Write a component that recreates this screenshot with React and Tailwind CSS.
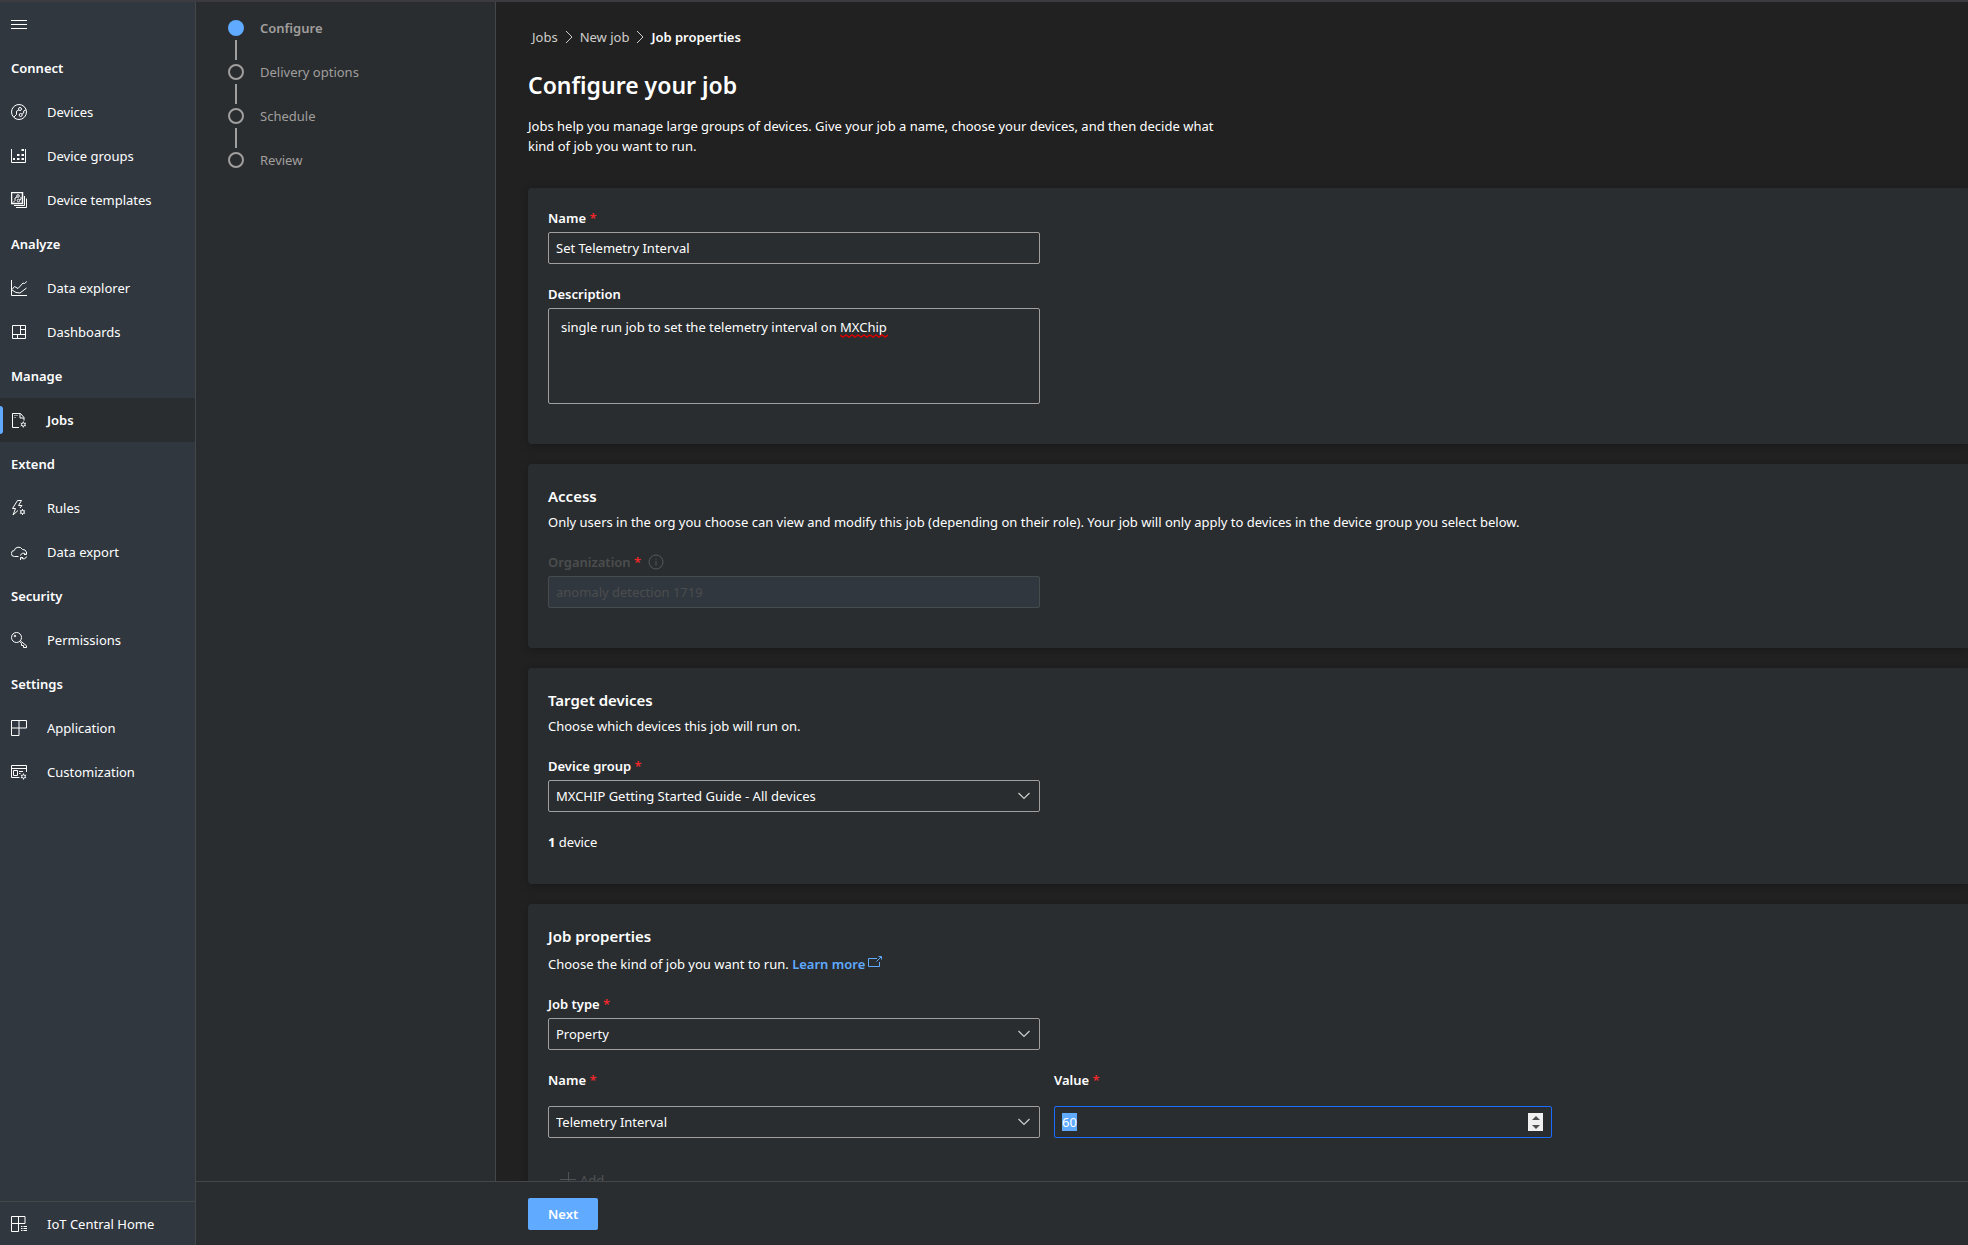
import { useEffect, useRef } from "react";

function Icon({ children, className = "" }) {
  return (
    <svg
      viewBox="0 0 16 16"
      fill="none"
      stroke="currentColor"
      strokeWidth="1"
      aria-hidden="true"
      className={`h-4 w-4 shrink-0 ${className}`}
    >
      {children}
    </svg>
  );
}

function Gear({ x, y }) {
  return (
    <g transform={`translate(${x} ${y})`}>
      <circle r="1.7" />
      <path d="M0-1.7V-3M0 1.7V3M-1.5-.8-2.6-1.5M1.5.8 2.6 1.5M-1.5.8-2.6 1.5M1.5-.8 2.6-1.5" />
    </g>
  );
}

const icons = {
  menu: (
    <Icon>
      <path d="M0 4.5h16M0 8.5h16M0 12.5h16" />
    </Icon>
  ),
  devices: (
    <Icon>
      <circle cx="8" cy="8" r="7.5" />
      <circle cx="9" cy="5" r="1.5" />
      <circle cx="9.7" cy="11" r="1.5" />
      <path d="M7.8 6 5.5 7.2v3.3L3 13M11 10.2l1.7-1.2V7l2.2-1.2" />
    </Icon>
  ),
  groups: (
    <Icon>
      <path d="M.5 1v13.5h14V1" />
      <path
        stroke="none"
        fill="currentColor"
        d="M2 10h2v2H2zM6 10h2.500v2H6zM10.500 10H13v2h-2.500zM6 6h2.500v2H6zM10.500 6H13v2h-2.500zM10.500 1H13v2h-2.500z"
      />
    </Icon>
  ),
  templates: (
    <Icon>
      <path d="M.5.5h11v11H.5z" strokeWidth="1.500" />
      <circle cx="7" cy="4" r="1.300" />
      <circle cx="7.500" cy="8.500" r="1.300" />
      <path d="M6 5 4 6v2.500L2 10.500M8.600 8l1.400-1V5" />
      <path d="M3 13.500h10.500V4M5 15.500h10.500V6.500" />
    </Icon>
  ),
  explorer: (
    <Icon>
      <path d="M.5 0v15.500H16" />
      <path d="m1 9.500 2.500-3 3.500 2 5-5.500 1.500.5L15.800 1.500M1 10l4 2.500 4 .5 6.500-5" />
    </Icon>
  ),
  dashboards: (
    <Icon>
      <path d="M1.500 1.500h13v13h-13zM9.500 1.500v8.500M1.500 10.500h13M9.500 5.500h5M6.500 10.500v4" />
    </Icon>
  ),
  jobs: (
    <Icon>
      <path d="M8 15.500H1.500V1.500h8l3.500 4v3M9 1.500v4.500h4" />
      <path d="M3.500 3.500h4M3.500 5.500h1.500" strokeDasharray="1 1" />
      <Gear x="12.300" y="12.500" />
    </Icon>
  ),
  rules: (
    <Icon>
      <path d="M6.500.5 1.500 8.500h3L2 15l5-4.500M6.500.5h4l-3 5H11L9 8" />
      <Gear x="11.500" y="12" />
    </Icon>
  ),
  export: (
    <Icon>
      <path d="M7.500 12.500H3.500a3 3 0 0 1-.3-6A4.500 4.500 0 0 1 11.500 5.500a3.500 3.500 0 0 1 3.800 2.500" />
      <path d="M9.500 11.500a3 3 0 0 1 5-1.500M15.500 8v2.500H13M15.500 12.500a3 3 0 0 1-5 1.500M9.500 16v-2.500H12" />
    </Icon>
  ),
  key: (
    <Icon>
      <circle cx="5.500" cy="5.500" r="5" />
      <circle cx="4" cy="4" r=".8" />
      <path d="m9.300 8.800 6.200 5v1.700h-3v-2h-2v-2L8.800 9.600" />
    </Icon>
  ),
  application: (
    <Icon>
      <path d="M.5.5h15v7.500H.5zM.5 8v7.500H8V.5" />
    </Icon>
  ),
  customization: (
    <Icon>
      <path d="M8.500 13.500H.5V1.500h15V8M.5 4.500h15M2.500 6.500h4v5h-4zM8 7.500h4M8 9.500h1.500" />
      <Gear x="12.500" y="12.500" />
    </Icon>
  ),
  home: (
    <Icon>
      <path d="M.5.500h13.500v7H.5zM7.500 15.500h-7v-8M7.500.5v15M10 10.500h1.500M12.500 10.500H16M10 12.500h1.500M12.500 12.500H16M10 14.500h1.500M12.500 14.500H16" />
    </Icon>
  ),
};

const sections = [
  { title: "Connect", items: [["Devices", "devices"], ["Device groups", "groups"], ["Device templates", "templates"]] },
  { title: "Analyze", items: [["Data explorer", "explorer"], ["Dashboards", "dashboards"]] },
  { title: "Manage", items: [["Jobs", "jobs"]] },
  { title: "Extend", items: [["Rules", "rules"], ["Data export", "export"]] },
  { title: "Security", items: [["Permissions", "key"]] },
  { title: "Settings", items: [["Application", "application"], ["Customization", "customization"]] },
];

const steps = ["Configure", "Delivery options", "Schedule", "Review"];

function NavItem({ label, icon, active }) {
  return (
    <a
      href="#"
      aria-current={active ? "page" : undefined}
      className={`relative flex h-11 items-center gap-5 pl-[11px] ${active ? "bg-[#292d30] font-semibold" : ""}`}
    >
      {active && <span className="absolute left-0 h-7 w-[3px] rounded-r-sm bg-[#60aaff]" />}
      {icons[icon]}
      {label}
    </a>
  );
}

function Sidebar() {
  return (
    <nav className="flex w-[196px] shrink-0 flex-col border-r border-[#43474a] bg-[#30373f]">
      <button type="button" aria-label="Toggle navigation" className="flex h-11 items-center pl-[11px]">
        {icons.menu}
      </button>
      {sections.map((s) => (
        <div key={s.title}>
          <h2 className="flex h-11 items-center pl-[11px] font-semibold">{s.title}</h2>
          {s.items.map(([label, icon]) => (
            <NavItem key={label} label={label} icon={icon} active={label === "Jobs"} />
          ))}
        </div>
      ))}
      <div className="mt-auto h-11 border-t border-[#43474a]">
        <NavItem label="IoT Central Home" icon="home" />
      </div>
    </nav>
  );
}

function Steps() {
  return (
    <ol className="w-[300px] shrink-0 border-r border-[#43474a] bg-[#292d30] pt-1 pl-8 text-[#a19f9d]">
      {steps.map((step, i) => (
        <li key={step} aria-current={i === 0 ? "step" : undefined} className="flex h-11 gap-4">
          <div className="flex w-4 flex-col items-center gap-1 pt-[14px]">
            <span
              className={`h-4 w-4 shrink-0 rounded-full ${i === 0 ? "bg-[#60aaff]" : "border-2 border-[#a19f9d]"}`}
            />
            {i < steps.length - 1 && <span className="h-5 w-[2px] shrink-0 bg-[#a19f9d]" />}
          </div>
          <span className={`pt-3 ${i === 0 ? "font-semibold" : ""}`}>{step}</span>
        </li>
      ))}
    </ol>
  );
}

function Label({ htmlFor, children, required, disabled }) {
  return (
    <label htmlFor={htmlFor} className={`block font-semibold ${disabled ? "text-[#4c4d4e]" : ""}`}>
      {children}
      {required && <span className="text-[#f1272a]"> *</span>}
    </label>
  );
}

function Chevron({ className }) {
  return (
    <svg viewBox="0 0 12 8" fill="none" stroke="currentColor" strokeWidth="1.2" aria-hidden="true" className={className}>
      <path d="m.5 1 5.500 5.500L11.500 1" />
    </svg>
  );
}

const box = "h-8 w-full rounded-xs border bg-transparent px-[7px] outline-none";

function Select({ id, value }) {
  return (
    <div className="relative">
      <select id={id} defaultValue={value} className={`${box} appearance-none border-[#a19f9d]`}>
        <option>{value}</option>
      </select>
      <Chevron className="pointer-events-none absolute top-3 right-[10px] h-2 w-3 text-[#d0cecc]" />
    </div>
  );
}

function Card({ title, children }) {
  return (
    <section className="rounded-l bg-[#292d30] p-5 shadow-[0_2px_8px_rgba(0,0,0,0.25)]">
      {title && <h2 className="text-[15px] leading-6 font-semibold">{title}</h2>}
      {children}
    </section>
  );
}

function Separator() {
  return (
    <svg viewBox="0 0 8 14" fill="none" stroke="currentColor" aria-hidden="true" className="h-[14px] w-2">
      <path d="m1 1 6 6-6 6" />
    </svg>
  );
}

function ValueInput() {
  const ref = useRef(null);
  useEffect(() => {
    ref.current.focus();
    ref.current.select();
  }, []);
  return (
    <div className="relative">
      <input
        ref={ref}
        id="prop-value"
        type="number"
        defaultValue="60"
        className={`${box} [appearance:textfield] border-[#1a6dff] selection:bg-[#60aaff] selection:text-white [&::-webkit-inner-spin-button]:appearance-none`}
      />
      <span className="absolute top-[7px] right-[9px] flex h-[18px] w-[15px] flex-col bg-[#f1f1f1] text-[#505050]">
        <button type="button" tabIndex={-1} aria-label="Increase" className="flex flex-1 items-center justify-center">
          <svg viewBox="0 0 8 4" className="h-1 w-2" fill="currentColor"><path d="M4 0 8 4H0z" /></svg>
        </button>
        <button type="button" tabIndex={-1} aria-label="Decrease" className="flex flex-1 items-center justify-center">
          <svg viewBox="0 0 8 4" className="h-1 w-2" fill="currentColor"><path d="M4 4 8 0H0z" /></svg>
        </button>
      </span>
    </div>
  );
}

function JobForm() {
  return (
    <main className="min-w-0 flex-1 overflow-hidden bg-[#212121] pt-[25px] pl-8">
      <nav aria-label="Breadcrumb" className="flex items-center gap-[7px] pl-1 text-[#d0cecc]">
        <a href="#">Jobs</a>
        <Separator />
        <a href="#">New job</a>
        <Separator />
        <span className="font-semibold text-white">Job properties</span>
      </nav>
      <h1 className="mt-[22px] text-[23px] leading-8 font-semibold">Configure your job</h1>
      <p className="mt-[15px] max-w-[712px]">
        Jobs help you manage large groups of devices. Give your job a name, choose your devices, and then decide what
        kind of job you want to run.
      </p>

      <form className="mt-8 flex flex-col gap-5">
        <Card>
          <div className="flex max-w-[492px] flex-col gap-1">
            <Label htmlFor="job-name" required>Name</Label>
            <input id="job-name" defaultValue="Set Telemetry Interval" className={`${box} border-[#a19f9d]`} />
          </div>
          <div className="mt-5 mb-5 flex max-w-[492px] flex-col gap-1">
            <Label htmlFor="job-description">Description</Label>
            <div className="relative">
              <textarea
                id="job-description"
                spellCheck={false}
                defaultValue="single run job to set the telemetry interval on MXChip"
                className="block h-24 w-full resize-none rounded-xs border border-[#a19f9d] bg-transparent px-3 py-2 outline-none"
              />
              <svg
                viewBox="0 0 48 4"
                fill="none"
                stroke="#d40000"
                strokeWidth="1.5"
                aria-hidden="true"
                className="pointer-events-none absolute top-[26px] left-[292px] h-1 w-12"
              >
                <path d="m0 1 3 2 3-2 3 2 3-2 3 2 3-2 3 2 3-2 3 2 3-2 3 2 3-2 3 2 3-2 3 2 3-2" />
              </svg>
            </div>
          </div>
        </Card>

        <Card title="Access">
          <p className="mt-1">
            Only users in the org you choose can view and modify this job (depending on their role). Your job will only
            apply to devices in the device group you select below.
          </p>
          <div className="mt-5 mb-5 flex max-w-[492px] flex-col gap-1">
            <div className="flex items-center gap-[7px]">
              <Label htmlFor="organization" required disabled>Organization</Label>
              <Icon className="text-[#56585a]">
                <circle cx="8" cy="8" r="7" />
                <path d="M8 7v4.500M8 4.500v1" />
              </Icon>
            </div>
            <input
              id="organization"
              disabled
              defaultValue="anomaly detection 1719"
              className="h-8 w-full rounded-xs border border-[#484b4d] bg-[#30373f] px-[7px] text-[#4c4d4e]"
            />
          </div>
        </Card>

        <Card title="Target devices">
          <p className="mt-1">Choose which devices this job will run on.</p>
          <div className="mt-5 flex max-w-[492px] flex-col gap-1">
            <Label htmlFor="device-group" required>Device group</Label>
            <Select id="device-group" value="MXCHIP Getting Started Guide - All devices" />
          </div>
          <p className="mt-5 mb-3"><b>1</b> device</p>
        </Card>

        <Card title="Job properties">
          <p className="mt-[6px]">
            Choose the kind of job you want to run.{" "}
            <a href="#" className="font-semibold text-[#60aaff]">
              Learn more
              <svg viewBox="0 0 14 12" fill="none" stroke="currentColor" aria-hidden="true" className="mt-[2px] ml-[3px] inline h-3 w-[14px] align-top">
                <path d="M9 2.500H.5v8h11V6M8.500 5.500l4.500-4.500M10.500 .5h3v3" />
              </svg>
            </a>
          </p>
          <div className="mt-5 flex max-w-[492px] flex-col gap-1">
            <Label htmlFor="job-type" required>Job type</Label>
            <Select id="job-type" value="Property" />
          </div>
          <div className="mt-5 grid max-w-[1004px] grid-cols-[492fr_498fr] gap-[14px]">
            <div className="flex flex-col gap-4">
              <Label htmlFor="prop-name" required>Name</Label>
              <Select id="prop-name" value="Telemetry Interval" />
            </div>
            <div className="flex flex-col gap-4">
              <Label htmlFor="prop-value" required>Value</Label>
              <ValueInput />
            </div>
          </div>
          <button type="button" disabled className="mt-8 ml-3 flex items-center gap-1 text-[#505254]">
            <svg viewBox="0 0 16 16" fill="none" stroke="currentColor" aria-hidden="true" className="h-4 w-4">
              <path d="M8.500 0v16M0 7.500h16" />
            </svg>
            Add
          </button>
        </Card>
      </form>
    </main>
  );
}

export default function App() {
  return (
    <div className="flex h-screen overflow-hidden border-t-2 border-[#3c3b40] bg-[#292d30] font-['Noto_Sans','Open_Sans',sans-serif] text-[13px] leading-5 text-white">
      <Sidebar />
      <div className="flex min-w-0 flex-1 flex-col">
        <div className="flex min-h-0 flex-1">
          <Steps />
          <JobForm />
        </div>
        <footer className="relative border-t border-[#43474a] bg-[#292d30] pt-4 pb-[15px] pl-[332px]">
          <button type="button" className="block h-8 rounded-xs bg-[#60aaff] px-5 font-semibold">
            Next
          </button>
        </footer>
      </div>
    </div>
  );
}
